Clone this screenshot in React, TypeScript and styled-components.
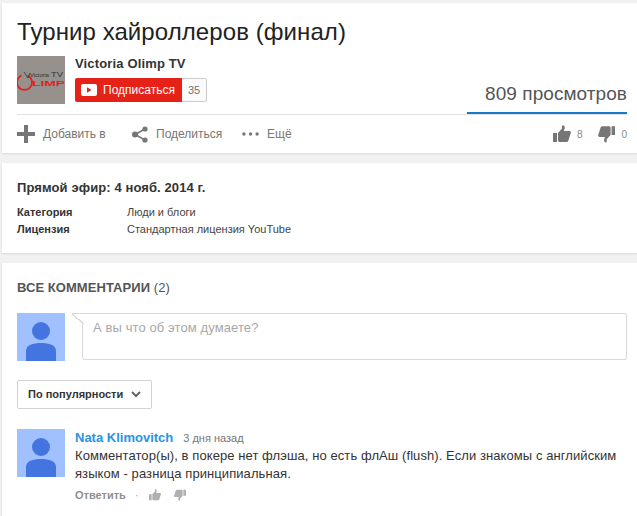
import styled, { createGlobalStyle } from 'styled-components'

const GlobalStyle = createGlobalStyle`
  html, body {
    margin: 0;
    padding: 0;
    background: #f1f1f1;
    overflow: hidden;
  }
  body {
    font-family: "Liberation Sans", Arial, sans-serif;
    color: #222;
  }
`

const Page = styled.main`
  width: 637px;
  height: 516px;
  padding: 3px 0 0 2px;
  box-sizing: border-box;
  display: flex;
  flex-direction: column;
  gap: 10px;
  overflow: hidden;
`

const Card = styled.section<{ $height: number }>`
  height: ${props => props.$height}px;
  box-sizing: border-box;
  flex-shrink: 0;
  background: #fff;
  box-shadow: 0 1px 2px rgba(0, 0, 0, 0.1);
  padding-left: 15px;
  padding-right: 10px;
`

const Title = styled.h1`
  margin: 0;
  padding-top: 15px;
  height: 38px;
  font-size: 24px;
  line-height: 28px;
  font-weight: 400;
  color: #222;
  letter-spacing: 0.08px;
`

const OwnerRow = styled.div`
  display: flex;
  justify-content: space-between;
  height: 58px;
  border-bottom: 1px solid #e2e2e2;
  box-sizing: content-box;
`

const Owner = styled.div`
  display: flex;
  gap: 10px;
`

const ChannelLogo = styled.svg`
  display: block;
  width: 48px;
  height: 48px;
`

const OwnerInfo = styled.div`
  display: flex;
  flex-direction: column;
  gap: 6px;
`

const ChannelName = styled.div`
  font-size: 13px;
  line-height: 16px;
  font-weight: 700;
  color: #333;
  letter-spacing: 0.15px;
`

const Subscribe = styled.div`
  display: flex;
  height: 24px;
`

const SubscribeButton = styled.div`
  width: 107px;
  display: flex;
  align-items: center;
  gap: 6px;
  padding-left: 6px;
  box-sizing: border-box;
  background: #e62117;
  border-radius: 2px 0 0 2px;
  color: #fff;
  font-size: 12px;
`

const SubscribeCount = styled.div`
  width: 25px;
  box-sizing: border-box;
  display: flex;
  align-items: center;
  justify-content: center;
  background: #fafafa;
  border: 1px solid #ccc;
  border-left: none;
  border-radius: 0 2px 2px 0;
  color: #737373;
  font-size: 11px;
`

const Views = styled.div`
  width: 160px;
  height: 58px;
  margin-bottom: -1px;
  display: flex;
  align-items: flex-end;
  justify-content: flex-end;
  padding-bottom: 7px;
  box-sizing: border-box;
  border-bottom: 2px solid #167ac6;
  font-size: 19px;
  line-height: 22px;
  color: #555;
  letter-spacing: 0.06px;
`

const Actions = styled.div`
  display: flex;
  align-items: center;
  justify-content: space-between;
  height: 38px;
`

const ActionGroup = styled.div`
  display: flex;
  align-items: center;
`

const Action = styled.div<{ $width: number }>`
  width: ${props => props.$width}px;
  display: flex;
  align-items: center;
  gap: 8px;
  font-size: 12px;
  font-weight: 400;
  color: #767676;
`

const Rating = styled.div<{ $width: number }>`
  width: ${props => props.$width}px;
  display: flex;
  align-items: center;
  gap: 6px;
  font-size: 10px;
  color: #8a8a8a;
`

const InfoCard = styled(Card)`
  padding-top: 17px;
`

const InfoTitle = styled.div`
  font-size: 13px;
  line-height: 16px;
  font-weight: 700;
  color: #333;
  margin-bottom: 8px;
  letter-spacing: 0.1px;
`

const MetaGrid = styled.dl`
  margin: 0;
  display: grid;
  grid-template-columns: 110px 1fr;
  grid-auto-rows: 17px;
  font-size: 11px;
  line-height: 17px;
`

const MetaKey = styled.dt`
  font-weight: 700;
  color: #333;
`

const MetaValue = styled.dd`
  margin: 0;
  color: #444;
`

const CommentsCard = styled(Card)`
  padding-top: 17px;
`

const CommentsHeader = styled.h2`
  margin: 0 0 17px;
  font-size: 13px;
  line-height: 16px;
  font-weight: 700;
  color: #555;
  letter-spacing: 0.06px;
`

const CommentsTotal = styled.span`
  font-weight: 400;
`

const Composer = styled.div`
  display: flex;
  gap: 17px;
  margin-bottom: 19px;
`

const AvatarIcon = styled.svg`
  display: block;
  width: 48px;
  height: 48px;
  flex-shrink: 0;
`

const ComposerBox = styled.div`
  position: relative;
  width: 545px;
  height: 47px;
  box-sizing: border-box;
  padding: 6px 10px;
  background: #fff;
  border: 1px solid #d9d9d9;
  border-radius: 2px;
  font-size: 13px;
  line-height: 16px;
  color: #a8a8a8;
  letter-spacing: 0.1px;

  &::before {
    content: '';
    position: absolute;
    left: -11px;
    top: -1px;
    width: 12px;
    height: 11px;
    box-sizing: border-box;
    border-top: 1px solid #d9d9d9;
    background: linear-gradient(to top right, transparent 46%, #d9d9d9 46%, #d9d9d9 54%, #fff 54%);
  }
`

const SortButton = styled.div`
  width: 135px;
  height: 29px;
  box-sizing: border-box;
  display: flex;
  align-items: center;
  gap: 8px;
  padding: 0 0 1px 10px;
  background: #fff;
  border: 1px solid #d3d3d3;
  border-radius: 2px;
  font-size: 11px;
  font-weight: 700;
  color: #333;
  margin-bottom: 20px;
`

const Comment = styled.article`
  display: flex;
  gap: 10px;
`

const CommentBody = styled.div`
  width: 552px;
`

const CommentHead = styled.div`
  display: flex;
  align-items: baseline;
  gap: 10px;
  height: 18px;
  line-height: 17px;
`

const Author = styled.span`
  font-size: 13px;
  font-weight: 700;
  color: #2793e6;
`

const Time = styled.span`
  font-size: 11px;
  color: #767676;
`

const CommentText = styled.p`
  margin: 0;
  font-size: 13px;
  line-height: 18px;
  color: #333;
  letter-spacing: 0.08px;
`

const CommentActions = styled.div`
  display: flex;
  align-items: center;
  gap: 9px;
  margin-top: 6px;
  font-size: 11px;
  font-weight: 700;
  color: #8f8f8f;

  svg + svg {
    margin-left: 4px;
  }
`

const Separator = styled.span`
  font-weight: 400;
  color: #aaa;
  margin-right: 1px;
`

const Avatar = () => (
  <AvatarIcon viewBox="0 0 48 48">
    <rect width="48" height="48" fill="#a0c0ff" />
    <circle cx="24" cy="18" r="9" fill="#4374e0" />
    <path d="M9 48V38c0-6 7-8 15-8s15 2 15 8v10z" fill="#4374e0" />
  </AvatarIcon>
)

const ThumbUp = ({ size, color }: { size: number; color: string }) => (
  <svg width={size} height={size} viewBox="0 0 18 18">
    <path
      fill={color}
      d="M0 8h4v9H0zM5 8l4-4.500V1c0-.8 1.600-1 2.300 0 .8 1.200.5 3-.5 5h5.400c1.400 0 2 1.200 1.500 2.300l-2.400 7.500c-.3.8-.9 1.200-1.700 1.200H7c-1 0-2-.5-2-1.500z"
    />
  </svg>
)

const ThumbDown = ({ size, color }: { size: number; color: string }) => (
  <svg width={size} height={size} viewBox="0 0 18 18">
    <path
      fill={color}
      d="M18 10h-4V1h4zM13 10l-4 4.500V17c0 .8-1.600 1-2.300 0-.8-1.200-.5-3 .5-5H1.800C.4 12-.2 10.800.3 9.700L2.700 2.200C3 1.400 3.600 1 4.400 1H11c1 0 2 .5 2 1.500z"
    />
  </svg>
)

export default function App() {
  return (
    <>
      <GlobalStyle />
      <Page>
        <Card $height={150}>
          <Title>Турнир хайроллеров (финал)</Title>
          <OwnerRow>
            <Owner>
              <ChannelLogo viewBox="0 0 48 48">
                <rect width="48" height="48" fill="#96918d" />
                <path d="M4.500 19.500a7.500 7.500 0 1 0 6 0" fill="none" stroke="#e2231a" strokeWidth="1.800" />
                <path d="M7 16l4 6 2-5" fill="none" stroke="#333" strokeWidth="0.800" />
                <text
                  x="13"
                  y="21"
                  fontFamily="Liberation Sans"
                  fontSize="5"
                  fill="#333"
                  textLength="19"
                  lengthAdjust="spacingAndGlyphs"
                >
                  Victoria
                </text>
                <text
                  x="34"
                  y="21"
                  fontFamily="Liberation Sans"
                  fontSize="7"
                  fill="#333"
                  textLength="12"
                  lengthAdjust="spacingAndGlyphs"
                >
                  TV
                </text>
                <text
                  x="15"
                  y="30"
                  fontFamily="Liberation Sans"
                  fontSize="8"
                  fontWeight="700"
                  fill="#e2231a"
                  textLength="33"
                  lengthAdjust="spacingAndGlyphs"
                >
                  LIMP
                </text>
              </ChannelLogo>
              <OwnerInfo>
                <ChannelName>Victoria Olimp TV</ChannelName>
                <Subscribe>
                  <SubscribeButton>
                    <svg width="16" height="12" viewBox="0 0 16 12">
                      <rect width="16" height="12" rx="2" fill="#fff" />
                      <path d="M6 3.200v5.600L10.500 6z" fill="#e62117" />
                    </svg>
                    Подписаться
                  </SubscribeButton>
                  <SubscribeCount>35</SubscribeCount>
                </Subscribe>
              </OwnerInfo>
            </Owner>
            <Views>809 просмотров</Views>
          </OwnerRow>
          <Actions>
            <ActionGroup>
              <Action $width={115}>
                <svg width="18" height="18" viewBox="0 0 18 18">
                  <path d="M7 0h4v7h7v4h-7v7H7v-7H0V7h7z" fill="#767676" />
                </svg>
                Добавить в
              </Action>
              <Action $width={110}>
                <svg width="16" height="17" viewBox="0 0 16 17">
                  <circle cx="3" cy="8.500" r="3" fill="#767676" />
                  <circle cx="13" cy="3" r="2.600" fill="#767676" />
                  <circle cx="13" cy="14" r="2.600" fill="#767676" />
                  <path d="M3 8.500L13 3M3 8.500L13 14" stroke="#767676" strokeWidth="1.500" />
                </svg>
                Поделиться
              </Action>
              <Action $width={80}>
                <svg width="17" height="4" viewBox="0 0 18 4">
                  <circle cx="2" cy="2" r="1.800" fill="#767676" />
                  <circle cx="9" cy="2" r="1.800" fill="#767676" />
                  <circle cx="16" cy="2" r="1.800" fill="#767676" />
                </svg>
                Ещё
              </Action>
            </ActionGroup>
            <ActionGroup>
              <Rating $width={45}>
                <ThumbUp size={18} color="#767676" />8
              </Rating>
              <Rating $width={29}>
                <ThumbDown size={18} color="#767676" />0
              </Rating>
            </ActionGroup>
          </Actions>
        </Card>

        <InfoCard $height={90}>
          <InfoTitle>Прямой эфир: 4 нояб. 2014 г.</InfoTitle>
          <MetaGrid>
            <MetaKey>Категория</MetaKey>
            <MetaValue>Люди и блоги</MetaValue>
            <MetaKey>Лицензия</MetaKey>
            <MetaValue>Стандартная лицензия YouTube</MetaValue>
          </MetaGrid>
        </InfoCard>

        <CommentsCard $height={260}>
          <CommentsHeader>
            ВСЕ КОММЕНТАРИИ <CommentsTotal>(2)</CommentsTotal>
          </CommentsHeader>
          <Composer>
            <Avatar />
            <ComposerBox>А вы что об этом думаете?</ComposerBox>
          </Composer>
          <SortButton>
            По популярности
            <svg width="10" height="7" viewBox="0 0 10 7">
              <path d="M1 1l4 4 4-4" fill="none" stroke="#666" strokeWidth="2" />
            </svg>
          </SortButton>
          <Comment>
            <Avatar />
            <CommentBody>
              <CommentHead>
                <Author>Nata Klimovitch</Author>
                <Time>3 дня назад</Time>
              </CommentHead>
              <CommentText>
                Комментатор(ы), в покере нет флэша, но есть флАш (flush). Если знакомы с английским языком - разница
                принципиальная.
              </CommentText>
              <CommentActions>
                Ответить
                <Separator>·</Separator>
                <ThumbUp size={12} color="#b0b0b0" />
                <ThumbDown size={12} color="#b0b0b0" />
              </CommentActions>
            </CommentBody>
          </Comment>
        </CommentsCard>
      </Page>
    </>
  )
}
